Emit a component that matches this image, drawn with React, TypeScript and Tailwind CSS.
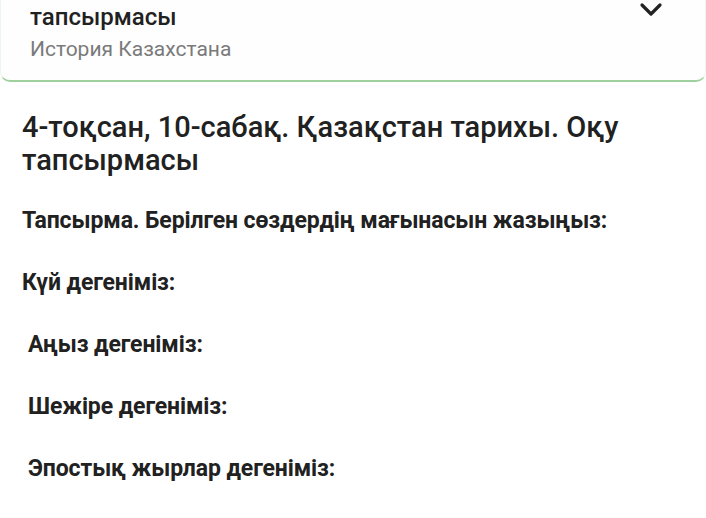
import React from "react";

const questions = [
  { text: "Күй дегеніміз:", indent: false },
  { text: "Аңыз дегеніміз:", indent: true },
  { text: "Шежіре дегеніміз:", indent: true },
  { text: "Эпостық жырлар дегеніміз:", indent: true },
];

const App = () => {
  return (
    <div className="w-[706px] h-[518px] overflow-hidden bg-white text-[#212121]" style={{ fontFamily: "Roboto, 'Noto Sans', sans-serif" }}>
      <div className="h-[82px] border-b-2 border-x border-[#9fd19f] border-x-[#eef5ee] rounded-b-[10px] bg-[#fefefe] flex justify-between pl-[29px] pr-[42px]">
        <div className="mt-[1px]">
          <div className="text-[24px] font-medium leading-[32px]">тапсырмасы</div>
          <div className="text-[21px] text-[#7a7a7a] leading-[28px] mt-[2px]">История Казахстана</div>
        </div>
        <svg width="24" height="16" viewBox="0 0 24 16" className="mt-[1px]">
          <path d="M3 4 L12 13 L21 4" fill="none" stroke="#222" strokeWidth="3.2" strokeLinecap="round" strokeLinejoin="round" />
        </svg>
      </div>

      <div className="px-[22px] pt-[29px]">
        <h1 className="text-[29px] font-medium leading-[33px]">
          4-тоқсан, 10-сабақ. Қазақстан тарихы. Оқу тапсырмасы
        </h1>
        <p className="mt-[30px] text-[23px] font-bold leading-[28px] tracking-[-0.1px]">
          Тапсырма. Берілген сөздердің мағынасын жазыңыз:
        </p>
        <div className="mt-[34px] flex flex-col gap-[34px]">
          {questions.map((q) => (
            <p key={q.text} className={`text-[23px] font-bold leading-[28px] tracking-[-0.1px] ${q.indent ? "pl-[6px]" : ""}`}>
              {q.text}
            </p>
          ))}
        </div>
      </div>
    </div>
  );
};

export default App;
